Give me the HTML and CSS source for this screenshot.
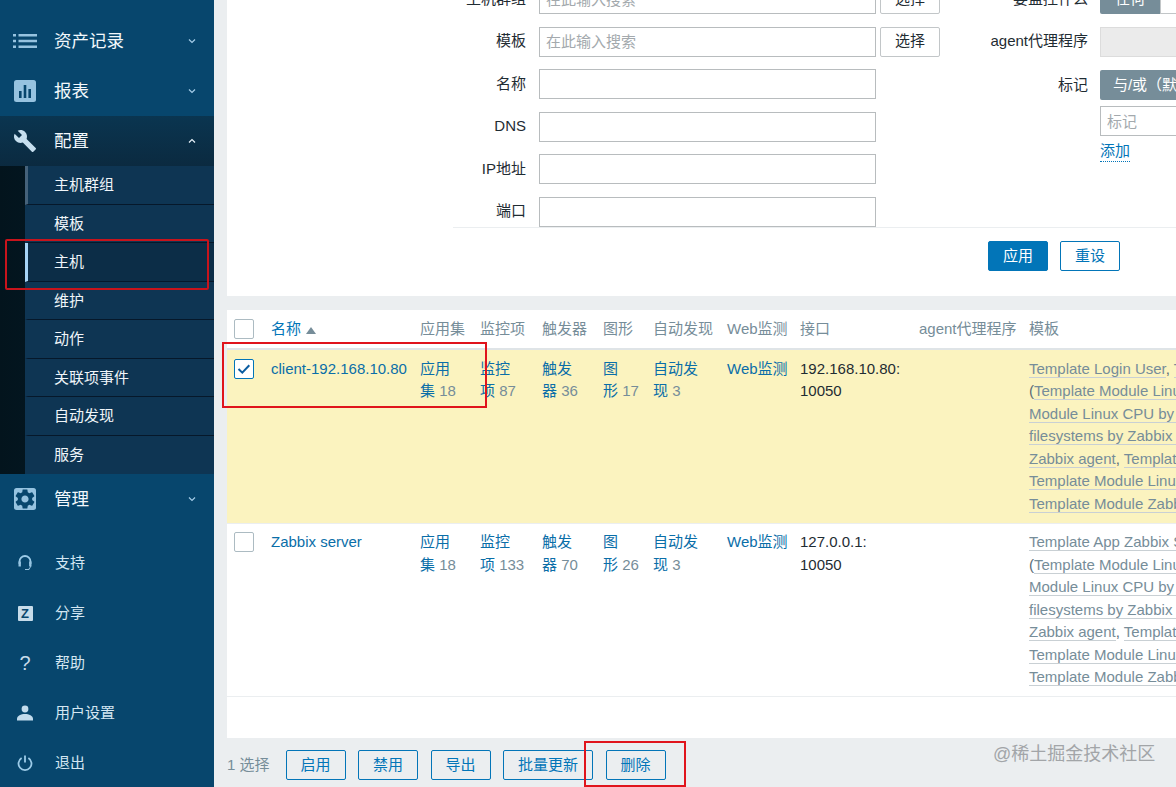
FILE: index.html
```html
<!DOCTYPE html>
<html lang="zh-CN">
<head>
    <meta charset="UTF-8">
    <meta name="viewport" content="width=device-width, initial-scale=1.0">
    <title>配置 - 主机</title>
    <link rel="stylesheet" href="styles.css">
</head>
<body>
    <aside class="sidebar">
        <nav class="menu">
            <a class="menu-item">
                <span class="menu-icon">
                    <svg width="24" height="24" viewBox="0 0 24 24"><path class="fill-light" d="M0 5h3v2.4H0zM0 10.800h3v2.400H0zM0 16.600h3V19H0zM5.500 5H24v2.400H5.500zM5.500 10.800H24v2.400H5.500zM5.500 16.600H24V19H5.500z"/></svg>
                </span>
                资产记录
                <svg class="chevron" width="8" height="6" viewBox="0 0 8 6"><path d="M1 1.500l3 3 3-3"/></svg>
            </a>
            <a class="menu-item">
                <span class="menu-icon">
                    <svg width="24" height="24" viewBox="0 0 24 24"><rect class="fill-light" x="1" y="1" width="22" height="22" rx="2.500"/><path class="fill-dark" d="M6 12h2.600v7H6zM10.700 6h2.600v13h-2.600zM15.400 10h2.600v9h-2.600z"/></svg>
                </span>
                报表
                <svg class="chevron" width="8" height="6" viewBox="0 0 8 6"><path d="M1 1.500l3 3 3-3"/></svg>
            </a>
            <a class="menu-item menu-open">
                <span class="menu-icon">
                    <svg width="24" height="24" viewBox="0 0 24 24"><path class="fill-white" d="M22.700 19l-9.100-9.100c.9-2.300.4-5-1.500-6.900-2-2-5-2.400-7.400-1.300L9 6 6 9 1.600 4.700C.4 7.100.9 10.100 2.900 12.100c1.900 1.900 4.600 2.400 6.900 1.500l9.100 9.100c.4.400 1 .4 1.400 0l2.300-2.300c.5-.4.5-1.100.1-1.400z"/></svg>
                </span>
                配置
                <svg class="chevron chevron-up" width="8" height="6" viewBox="0 0 8 6"><path d="M1 4.500l3-3 3 3"/></svg>
            </a>
            <ul class="submenu">
                <li class="sub-hover">主机群组</li>
                <li>模板</li>
                <li class="sub-active">主机</li>
                <li>维护</li>
                <li>动作</li>
                <li>关联项事件</li>
                <li>自动发现</li>
                <li>服务</li>
            </ul>
            <a class="menu-item">
                <span class="menu-icon">
                    <svg width="24" height="24" viewBox="0 0 24 24"><rect class="fill-light" x="1" y="1" width="22" height="22" rx="2.500"/><path class="fill-dark" d="M19.140 12.940c.04-.3.06-.61.06-.94 0-.32-.02-.64-.07-.94l2.030-1.580c.18-.14.23-.41.12-.61l-1.920-3.320c-.12-.22-.37-.29-.59-.22l-2.390.96c-.5-.38-1.030-.7-1.620-.94l-.36-2.540c-.04-.24-.24-.41-.48-.41h-3.840c-.24 0-.43.17-.47.41l-.36 2.540c-.59.24-1.130.57-1.620.94l-2.390-.96c-.22-.08-.47 0-.59.22L2.740 8.870c-.12.21-.08.47.12.61l2.030 1.580c-.05.3-.09.63-.09.94s.02.64.07.94l-2.030 1.580c-.18.14-.23.41-.12.61l1.920 3.320c.12.22.37.29.59.22l2.390-.96c.5.38 1.030.7 1.620.94l.36 2.540c.05.24.24.41.48.41h3.840c.24 0 .44-.17.47-.41l.36-2.540c.59-.24 1.130-.56 1.620-.94l2.390.96c.22.08.47 0 .59-.22l1.920-3.320c.12-.22.07-.47-.12-.61l-2.010-1.580zM12 15.600c-1.980 0-3.600-1.620-3.600-3.600s1.620-3.600 3.600-3.600 3.600 1.620 3.600 3.600-1.620 3.600-3.600 3.600z"/></svg>
                </span>
                管理
                <svg class="chevron" width="8" height="6" viewBox="0 0 8 6"><path d="M1 1.500l3 3 3-3"/></svg>
            </a>
        </nav>
        <div class="user-menu">
            <a class="user-item">
                <span class="user-icon">
                    <svg width="16" height="16" viewBox="0 0 16 16"><path class="stroke-light" d="M2.500 9V6.500a5.500 5.500 0 0 1 11 0V9"/><path class="fill-light" d="M1.500 6.500h2.400v5H1.500zM12.100 6.500h2.400v5h-2.400zM8 14h3.500l1.800-2.600h.9L12 15H8z"/></svg>
                </span>
                支持
            </a>
            <a class="user-item">
                <span class="user-icon"><span class="z-box">Z</span></span>
                分享
            </a>
            <a class="user-item">
                <span class="user-icon"><span class="help-mark">?</span></span>
                帮助
            </a>
            <a class="user-item">
                <span class="user-icon">
                    <svg width="16" height="16" viewBox="0 0 16 16"><circle class="fill-white-soft" cx="8" cy="4" r="3.400"/><path class="fill-white-soft" d="M0 15.500v-1.800C0 11 4 9 8 9s8 2 8 4.700v1.800z"/></svg>
                </span>
                用户设置
            </a>
            <a class="user-item">
                <span class="user-icon">
                    <svg width="16" height="16" viewBox="0 0 16 16"><path class="stroke-light" d="M4.600 3A6.500 6.500 0 1 0 11.400 3M8 .5v7"/></svg>
                </span>
                退出
            </a>
        </div>
    </aside>

    <main class="content">
        <section class="filter">
            <div class="filter-body">
                <div class="filter-left">
                    <div class="form-row">
                        <label>主机群组</label>
                        <input class="field" placeholder="在此输入搜索">
                        <button class="btn-select">选择</button>
                    </div>
                    <div class="form-row">
                        <label>模板</label>
                        <input class="field" placeholder="在此输入搜索">
                        <button class="btn-select">选择</button>
                    </div>
                    <div class="form-row"><label>名称</label><input class="field"></div>
                    <div class="form-row"><label>DNS</label><input class="field"></div>
                    <div class="form-row"><label>IP地址</label><input class="field"></div>
                    <div class="form-row"><label>端口</label><input class="field"></div>
                </div>
                <div class="filter-right">
                    <div class="form-row">
                        <label>要监控什么</label>
                        <div class="segment"><span class="seg-on">任何</span><span class="seg-off">和</span></div>
                    </div>
                    <div class="form-row">
                        <label>agent代理程序</label>
                        <input class="field field-disabled" disabled>
                    </div>
                    <div class="form-row tag-row">
                        <label>标记</label>
                        <div class="segment"><span class="seg-on seg-wide">与/或（默认）</span></div>
                    </div>
                    <div class="tag-input"><input class="field" placeholder="标记"></div>
                    <a class="add-link">添加</a>
                </div>
            </div>
            <div class="filter-actions">
                <button class="btn btn-primary">应用</button>
                <button class="btn btn-outline">重设</button>
            </div>
        </section>

        <section class="hosts">
            <table class="host-table">
                <colgroup>
                    <col class="col-check"><col class="col-name"><col class="col-app"><col class="col-item">
                    <col class="col-trigger"><col class="col-graph"><col class="col-disc"><col class="col-web">
                    <col class="col-port"><col class="col-agent"><col class="col-tpl">
                </colgroup>
                <thead>
                    <tr>
                        <th><span class="check"></span></th>
                        <th class="sorted">名称 <span class="sort-arrow"></span></th>
                        <th>应用集</th>
                        <th>监控项</th>
                        <th>触发器</th>
                        <th>图形</th>
                        <th>自动发现</th>
                        <th>Web监测</th>
                        <th>接口</th>
                        <th>agent代理程序</th>
                        <th>模板</th>
                    </tr>
                </thead>
                <tbody>
                    <tr class="row-selected">
                        <td>
                            <span class="check check-on">
                                <svg width="14" height="14" viewBox="0 0 14 14"><path d="M1.500 7l3.800 3.700 7-7.400"/></svg>
                            </span>
                        </td>
                        <td><a class="link">client-192.168.10.80</a></td>
                        <td><a class="link">应用<br>集</a> <span class="count">18</span></td>
                        <td><a class="link">监控<br>项</a> <span class="count">87</span></td>
                        <td><a class="link">触发<br>器</a> <span class="count">36</span></td>
                        <td><a class="link">图<br>形</a> <span class="count">17</span></td>
                        <td><a class="link">自动发<br>现</a> <span class="count">3</span></td>
                        <td><a class="link">Web监测</a></td>
                        <td>192.168.10.80:<br>10050</td>
                        <td></td>
                        <td class="templates">
                            <a>Template Login User</a>, <a>Template OS Linux by Zabbix agent</a><br>
                            (<a>Template Module Linux block devices by Zabbix agent</a><br>
                            <a>Module Linux CPU by Zabbix agent</a><br>
                            <a>filesystems by Zabbix agent</a><br>
                            <a>Zabbix agent</a>, <a>Template Module Linux memory</a><br>
                            <a>Template Module Linux network interfaces</a><br>
                            <a>Template Module Zabbix agent</a>)
                        </td>
                    </tr>
                    <tr>
                        <td><span class="check"></span></td>
                        <td><a class="link">Zabbix server</a></td>
                        <td><a class="link">应用<br>集</a> <span class="count">18</span></td>
                        <td><a class="link">监控<br>项</a> <span class="count">133</span></td>
                        <td><a class="link">触发<br>器</a> <span class="count">70</span></td>
                        <td><a class="link">图<br>形</a> <span class="count">26</span></td>
                        <td><a class="link">自动发<br>现</a> <span class="count">3</span></td>
                        <td><a class="link">Web监测</a></td>
                        <td>127.0.0.1:<br>10050</td>
                        <td></td>
                        <td class="templates">
                            <a>Template App Zabbix Server</a>, <a>Template OS Linux</a><br>
                            (<a>Template Module Linux block devices by Zabbix agent</a><br>
                            <a>Module Linux CPU by Zabbix agent</a><br>
                            <a>filesystems by Zabbix agent</a><br>
                            <a>Zabbix agent</a>, <a>Template Module Linux memory</a><br>
                            <a>Template Module Linux network interfaces</a><br>
                            <a>Template Module Zabbix agent</a>)
                        </td>
                    </tr>
                </tbody>
            </table>
        </section>

        <div class="action-bar">
            <span class="selected-count">1 选择</span>
            <button class="btn btn-ghost">启用</button>
            <button class="btn btn-ghost">禁用</button>
            <button class="btn btn-ghost">导出</button>
            <button class="btn btn-ghost btn-long">批量更新</button>
            <button class="btn btn-ghost">删除</button>
        </div>
    </main>

    <!-- 截图上的标注 -->
    <div class="mark mark-menu"></div>
    <div class="mark mark-row"></div>
    <div class="mark mark-delete"></div>
    <div class="watermark">@稀土掘金技术社区</div>
</body>
</html>
```

FILE: styles.css
```css
* {
    box-sizing: border-box;
}

html, body {
    height: 787px;
    overflow: hidden;
}

body {
    margin: 0;
    display: flex;
    position: relative;
    background-color: #ebeef0;
    color: #1f2c33;
    font-family: "Liberation Sans", "Noto Sans CJK SC", sans-serif;
    font-size: 15px;
    line-height: 22.5px;
}

/* 侧边栏 */
.sidebar {
    width: 214px;
    flex-shrink: 0;
    height: 787px;
    padding-top: 16px;
    background-color: #07466d;
    overflow: hidden;
}

.menu-item {
    display: flex;
    align-items: center;
    height: 50px;
    padding-left: 13px;
    color: #f2f8fc;
    font-size: 17.5px;
}

.menu-open {
    background: linear-gradient(#0a3550, #0b2a40);
}

.menu-icon {
    display: flex;
    width: 24px;
    margin-right: 17px;
}

.chevron {
    margin-left: auto;
    margin-right: 18px;
    fill: none;
    stroke: #a5cde8;
    stroke-width: 1.2;
}

.chevron-up {
    stroke: #e8f2f9;
}

.fill-light {
    fill: #96c3e0;
}

.fill-dark {
    fill: #07466d;
}

.fill-white {
    fill: #c6dfef;
}

.fill-white-soft {
    fill: #c2dced;
}

.stroke-light {
    fill: none;
    stroke: #9ccbe8;
    stroke-width: 1.8;
}

.submenu {
    list-style: none;
    margin: 0;
    padding: 0 0 0 25px;
    background: linear-gradient(90deg, #03141d, #04202f);
}

.submenu li {
    height: 38.5px;
    line-height: 37px;
    padding-left: 26px;
    border-left: 3px solid transparent;
    border-bottom: 1px solid #06182a;
    background-color: #0e3553;
    color: #f0f5f9;
}

.submenu li:last-child {
    border-bottom: 0;
}

.submenu .sub-hover {
    border-left-color: #45627a;
}

.submenu .sub-active {
    border-left-color: #a6d3f5;
    background-color: #0c2d47;
}

.user-menu {
    margin-top: 14px;
}

.user-item {
    display: flex;
    align-items: center;
    height: 50px;
    padding-left: 17px;
    color: #d4e6f2;
}

.user-icon {
    display: flex;
    justify-content: center;
    align-items: center;
    width: 16px;
    margin-right: 22px;
}

.z-box {
    width: 15px;
    height: 15px;
    border-radius: 1px;
    background-color: #c7dcea;
    color: #07466d;
    font-size: 13px;
    font-weight: bold;
    line-height: 15px;
    text-align: center;
}

.help-mark {
    color: #c7dcea;
    font-size: 20px;
    line-height: 22px;
}

/* 内容区 */
.content {
    flex: 1;
    min-width: 0;
    padding-left: 13px;
    overflow: hidden;
}

.filter {
    margin-top: -16px;
    height: 312px;
    background-color: #fff;
}

.filter-body {
    display: flex;
    height: 243px;
}

.filter-left {
    width: 761px;
    flex-shrink: 0;
}

.filter-right {
    flex: 1;
    min-width: 0;
}

.form-row {
    display: flex;
    align-items: center;
    height: 30px;
    margin-bottom: 12.5px;
}

.form-row label {
    flex-shrink: 0;
    text-align: right;
}

.filter-left label {
    width: 299px;
    margin-right: 13px;
}

.filter-right label {
    width: 100px;
    margin-right: 12px;
}

.field {
    height: 30px;
    padding: 0 6px;
    border: 1px solid #b8bcbe;
    background-color: #fff;
    color: #1f2c33;
    font: inherit;
    outline: 0;
}

.field::placeholder {
    color: #a3a9ad;
}

.filter-left .field {
    width: 337px;
}

.field-disabled {
    width: 100px;
    background-color: #ebebeb;
    border-color: #dcdcdc;
}

.btn-select {
    width: 60px;
    height: 30px;
    margin-left: 4px;
    border: 1px solid #c2c6c8;
    border-radius: 2px;
    background-color: #fff;
    color: #1f2c33;
    font: inherit;
}

.segment {
    display: flex;
    height: 30px;
    white-space: nowrap;
}

.seg-on {
    width: 60px;
    border-radius: 2px 0 0 2px;
    background-color: #768d99;
    color: #fff;
    line-height: 30px;
    text-align: center;
}

.seg-wide {
    width: 120px;
}

.seg-off {
    width: 60px;
    border: 1px solid #c2c6c8;
    line-height: 28px;
    text-align: center;
}

.tag-row {
    margin-bottom: 7px;
    position: relative;
    top: 1px;
}

.tag-input {
    margin-left: 112px;
}

.tag-input .field {
    width: 100px;
}

.add-link {
    display: inline-block;
    margin: 5px 0 0 112px;
    border-bottom: 1px dotted #0275b8;
    color: #0275b8;
    line-height: 20px;
}

.filter-actions {
    display: flex;
    justify-content: flex-end;
    gap: 12px;
    margin-left: 226px;
    padding: 13px 56px 0 0;
    border-top: 1px solid #ebeef0;
}

.btn {
    width: 60px;
    height: 30px;
    padding: 0;
    border: 1px solid #0275b8;
    border-radius: 2px;
    font: inherit;
}

.btn-primary {
    background-color: #0275b8;
    color: #fff;
}

.btn-outline {
    background-color: #fff;
    color: #0275b8;
}

.btn-ghost {
    background-color: transparent;
    color: #0275b8;
}

.btn-long {
    width: 90px;
}

/* 主机列表 */
.hosts {
    height: 428px;
    margin-top: 14px;
    background-color: #fff;
    overflow: hidden;
}

.host-table {
    width: 1102px;
    table-layout: fixed;
    border-collapse: collapse;
}

.col-check { width: 44px; }
.col-name { width: 149px; }
.col-app { width: 60px; }
.col-item { width: 62px; }
.col-trigger { width: 61px; }
.col-graph { width: 50px; }
.col-disc { width: 74px; }
.col-web { width: 73px; }
.col-port { width: 119px; }
.col-agent { width: 110px; }
.col-tpl { width: 300px; }

.host-table th {
    height: 39px;
    padding: 0;
    border-bottom: 2px solid #dfe4e7;
    color: #768d99;
    font-weight: normal;
    text-align: left;
    white-space: nowrap;
}

.host-table td {
    padding: 7.5px 0;
    border-bottom: 1px solid #ebeef0;
    vertical-align: top;
    white-space: nowrap;
}

.row-selected td {
    background-color: #fbf3bf;
}

.host-table .sorted {
    color: #0275b8;
}

.sort-arrow {
    display: inline-block;
    margin-left: 1px;
    border-left: 5px solid transparent;
    border-right: 5px solid transparent;
    border-bottom: 7px solid #768d99;
}

.check {
    display: flex;
    justify-content: center;
    align-items: center;
    width: 20px;
    height: 20px;
    margin-left: 7px;
    border: 1px solid #acbbc2;
    border-radius: 2px;
    background-color: #fff;
}

td .check {
    margin-top: 1px;
}

.check-on {
    border-color: #0275b8;
}

.check-on path {
    fill: none;
    stroke: #0a5da0;
    stroke-width: 2;
}

.link {
    color: #0a6ea8;
}

.count {
    color: #768d99;
}

.templates {
    color: #5a6b75;
}

.templates a {
    border-bottom: 1px solid #c9d0d4;
    color: #768d99;
}

.action-bar {
    display: flex;
    align-items: center;
    gap: 12.5px;
    margin-top: 12px;
}

.selected-count {
    width: 46px;
    color: #768d99;
}

/* 红框和水印 */
.mark {
    position: absolute;
    border: 2px solid #e0141c;
}

.mark-menu {
    left: 5px;
    top: 239px;
    width: 204px;
    height: 51px;
    border-color: #c8141c;
    border-radius: 2px;
}

.mark-row {
    left: 222px;
    top: 342px;
    width: 265px;
    height: 66px;
}

.mark-delete {
    left: 584px;
    top: 741px;
    width: 102px;
    height: 46px;
}

.watermark {
    position: absolute;
    left: 993px;
    top: 742px;
    color: #a2a5a8;
    font-size: 18px;
    line-height: 24px;
    white-space: nowrap;
}
```
